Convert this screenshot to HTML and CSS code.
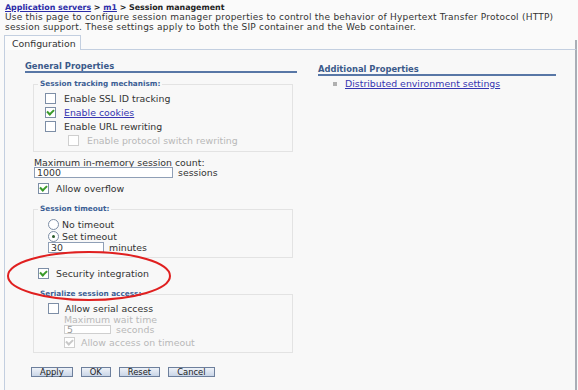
FILE: index.html
```html
<!DOCTYPE html>
<html lang="en">
<head>
    <meta charset="UTF-8">
    <title>Session management</title>
    <link rel="stylesheet" href="styles.css">
</head>
<body>
    <div class="crumbs"><a href="#">Application servers</a> &gt; <a href="#">m1</a> &gt; Session management</div>
    <p class="intro">Use this page to configure session manager properties to control the behavior of Hypertext Transfer Protocol (HTTP)<br>session support. These settings apply to both the SIP container and the Web container.</p>

    <div class="tabs"><span class="tab">Configuration</span><span class="tabfill"></span></div>

    <div class="panel">
        <div class="cols">
            <div class="general">
                <h3 class="sect">General Properties</h3>

                <fieldset class="group">
                    <legend>Session tracking mechanism:</legend>
                    <div class="row"><span class="box"></span>Enable SSL ID tracking</div>
                    <div class="row"><span class="box on"></span><a href="#">Enable cookies</a></div>
                    <div class="row"><span class="box"></span>Enable URL rewriting</div>
                    <div class="row sub off"><span class="box"></span>Enable protocol switch rewriting</div>
                </fieldset>

                <div class="field">
                    <div class="caption">Maximum in-memory session count:</div>
                    <div class="line"><span class="input wide">1000</span>sessions</div>
                </div>
                <div class="row solo"><span class="box on"></span>Allow overflow</div>

                <fieldset class="group timeout">
                    <legend>Session timeout:</legend>
                    <div class="row"><span class="radio"></span>No timeout</div>
                    <div class="row"><span class="radio on"></span>Set timeout</div>
                    <div class="line"><span class="input short">30</span>minutes</div>
                </fieldset>

                <div class="row solo secure"><span class="box on"></span>Security integration</div>

                <fieldset class="group serial">
                    <legend>Serialize session access:</legend>
                    <div class="row"><span class="box"></span>Allow serial access</div>
                    <div class="sub off">
                        <div class="caption">Maximum wait time</div>
                        <div class="line"><span class="input tiny">5</span>seconds</div>
                        <div class="row"><span class="box on"></span>Allow access on timeout</div>
                    </div>
                </fieldset>
            </div>

            <div class="additional">
                <h3 class="sect">Additional Properties</h3>
                <div class="links">
                    <div class="item"><span class="bullet"></span><a href="#">Distributed environment settings</a></div>
                </div>
            </div>
        </div>

        <div class="buttons">
            <button>Apply</button>
            <button>OK</button>
            <button>Reset</button>
            <button>Cancel</button>
        </div>

        <svg class="mark" width="166" height="52" viewBox="0 0 166 52">
            <ellipse cx="83" cy="26" rx="81" ry="24" fill="none" stroke="#e02020" stroke-width="2"/>
        </svg>
    </div>
</body>
</html>
```

FILE: styles.css
```css
body {
    margin: 0;
    padding: 3px 1px 0 4px;
    font-family: "DejaVu Sans", Verdana, sans-serif;
    font-size: 9.4px;
    color: #333;
    background-color: #fafafa;
}
a {
    color: #3535b0;
}
.crumbs {
    font-weight: bold;
    font-size: 7.9px;
    line-height: 10px;
    color: #222;
    padding-left: 1px;
}
.crumbs a {
    color: #2c2ca8;
}
.intro {
    margin: 0 0 0 1px;
    font-size: 9px;
    letter-spacing: 0.22px;
    line-height: 9.5px;
    white-space: nowrap;
    color: #333;
}
.tabs {
    margin-top: 3px;
    height: 15px;
    display: flex;
}
.tab {
    width: 77px;
    border: 1px solid #c3cfe0;
    border-bottom: none;
    background-color: #fcfcfc;
    padding: 2px 0 0 7px;
    box-sizing: border-box;
    color: #333;
}
.tabfill {
    flex: 1;
    border-bottom: 1px solid #c3cfe0;
    border-right: 2px solid #a9aeb6;
    margin-top: 5px;
}
.panel {
    position: relative;
    border-left: 1px solid #c3cfe0;
    border-right: 2px solid #a9aeb6;
    background-color: #f8f8f8;
    height: 340px;
    padding: 12px 0 0 20px;
    box-sizing: border-box;
}
.cols {
    display: grid;
    grid-template-columns: 272px 238px;
    gap: 21px;
}
.sect {
    margin: 0;
    font-size: 8.4px;
    line-height: 9px;
    color: #3b5a8a;
    border-bottom: 2px solid #5877a6;
}
.group {
    margin: 6px 0 0 8px;
    width: 260px;
    box-sizing: border-box;
    border: 1px solid #e3e3e3;
    padding: 2px 0 4px 11px;
}
.group legend {
    font-size: 7.3px;
    line-height: 10px;
    font-weight: bold;
    color: #3c5f95;
    padding: 0 2px;
    margin-left: -7px;
}
.row {
    display: flex;
    align-items: center;
    gap: 8px;
    height: 14px;
}
.sub {
    padding-left: 23px;
}
.off {
    color: #b8b8b8;
}
.box {
    width: 9px;
    height: 9px;
    border: 1px solid #7d8ea6;
    background-color: #fff;
    position: relative;
}
.off .box {
    border-color: #cfcfcf;
}
.box.on::after {
    content: "";
    position: absolute;
    left: 2px;
    top: 0;
    width: 3px;
    height: 5px;
    border: solid #3a9a2a;
    border-width: 0 2px 2px 0;
    transform: rotate(45deg);
}
.off .box.on::after {
    border-color: #c8c8c8;
}
.radio {
    width: 9px;
    height: 9px;
    border: 1px solid #7d8ea6;
    border-radius: 50%;
    background-color: #fff;
    position: relative;
    margin: 0 -5px 0 3px;
}
.radio.on::after {
    content: "";
    position: absolute;
    left: 3px;
    top: 3px;
    width: 3px;
    height: 3px;
    border-radius: 50%;
    background-color: #2a5a2a;
}
.field {
    margin: 6px 0 0 9px;
}
.caption {
    line-height: 9px;
}
.line {
    display: flex;
    align-items: center;
    gap: 5px;
}
.input {
    height: 9px;
    border: 1px solid #8f9fb6;
    background-color: #fff;
    padding-left: 2px;
    line-height: 9px;
    box-sizing: content-box;
}
.off .input {
    border-color: #cfcfcf;
    color: #999;
}
.wide {
    width: 135px;
}
.short {
    width: 52px;
}
.tiny {
    width: 43px;
    height: 7px;
    line-height: 7px;
}
.solo {
    margin: 3px 0 0 13px;
    gap: 7px;
}
.timeout {
    margin-top: 9px;
    padding-top: 4px;
}
.timeout .row {
    height: 12px;
}
.timeout .line {
    margin: 0 0 0 3px;
}
.secure {
    margin-top: 8px;
}
.serial {
    margin-top: 9px;
    padding-left: 14px;
    padding-bottom: 3px;
}
.serial legend {
    margin-left: -10px;
}
.serial .row {
    gap: 6px;
}
.serial .sub {
    padding-left: 16px;
}
.additional {
    padding-top: 3px;
}
.links {
    margin: 2px 0 0 15px;
}
.item {
    display: flex;
    align-items: center;
    gap: 8px;
}
.bullet {
    width: 4px;
    height: 4px;
    background-color: #b0b0b0;
}
.buttons {
    margin: 14px 0 0 6px;
    display: flex;
    gap: 8px;
}
button {
    font-family: inherit;
    font-size: 8.4px;
    line-height: 8px;
    color: #222;
    padding: 0 8px;
    min-width: 30px;
    height: 10px;
    border: 1px solid #6d7f9c;
    background: linear-gradient(#eef2f8, #c9d5e7);
}
.mark {
    position: absolute;
    left: 1px;
    top: 200px;
}
```
